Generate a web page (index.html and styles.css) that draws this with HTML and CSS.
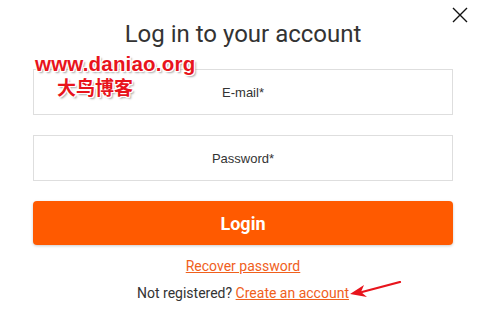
FILE: index.html
```html
<!DOCTYPE html>
<html>
<head>
<meta charset="utf-8">
<link rel="stylesheet" href="styles.css">
</head>
<body>
<div class="modal">
  <button class="close" aria-label="Close">
    <svg width="16" height="16" viewBox="0 0 16 16"><path d="M1 1 L15 15 M15 1 L1 15" stroke="#111" stroke-width="1.4" fill="none"/></svg>
  </button>
  <h1 class="title">Log in to your account</h1>
  <form class="form">
    <div class="field">E-mail*</div>
    <div class="field">Password*</div>
    <button type="button" class="login">Login</button>
  </form>
  <p class="recover"><a href="#">Recover password</a></p>
  <p class="register">Not registered? <a href="#">Create an account</a></p>

  <div class="wm">
    <div class="wm-url">www.daniao.org</div>
    <div class="wm-cn">大鸟博客</div>
  </div>
  <svg class="arrow" width="54" height="18" viewBox="0 0 54 18">
    <path d="M52 1 L14 11" stroke="#e8141c" stroke-width="2.2" fill="none" stroke-linecap="round"/>
    <path d="M2 13 L16 4 L13 11 L19 16 Z" fill="#e8141c"/>
  </svg>
</div>
</body>
</html>
```
FILE: styles.css
```css
* { box-sizing: border-box; }
html, body { margin: 0; padding: 0; background: #fff; }
body {
  font-family: Roboto, "Liberation Sans", Arial, sans-serif;
  color: #333;
  width: 480px;
  height: 316px;
  overflow: hidden;
}
.modal {
  position: relative;
  padding: 20px 27px 0 33px;
}
.close {
  position: absolute;
  top: 7px;
  right: 12px;
  width: 16px;
  height: 16px;
  padding: 0;
  border: 0;
  background: none;
  display: flex;
}
.title {
  margin: 0;
  font-size: 24px;
  line-height: 28px;
  font-weight: 400;
  text-align: center;
  color: #333;
}
.form {
  margin-top: 21px;
  display: flex;
  flex-direction: column;
  gap: 20px;
}
.field {
  height: 46px;
  border: 1px solid #dedede;
  display: flex;
  align-items: center;
  justify-content: center;
  font-family: "Liberation Sans", Arial, sans-serif;
  font-size: 13px;
  color: #333;
}
.login {
  height: 44px;
  border: 0;
  border-radius: 4px;
  background: #ff5a00;
  color: #fff;
  font-family: Roboto, "Liberation Sans", Arial, sans-serif;
  font-size: 18px;
  font-weight: 700;
  box-shadow: 0 1px 3px rgba(0,0,0,0.2);
}
.recover, .register {
  margin: 0;
  text-align: center;
  font-size: 14px;
  line-height: 20px;
}
.recover { margin-top: 11px; }
.register { margin-top: 7px; color: #333; }
a { color: #f0601c; text-decoration: underline; }
.wm {
  position: absolute;
  left: 35px;
  top: 52px;
  color: #e8141c;
  font-weight: 700;
  text-shadow: 1px 0 #fff, -1px 0 #fff, 0 1px #fff, 0 -1px #fff, 1px 1px #fff, -1px -1px #fff, 1px -1px #fff, -1px 1px #fff, 2px 2px 2px rgba(0,0,0,0.35);
}
.wm-url {
  font-family: "Liberation Sans", Arial, sans-serif;
  font-size: 20.5px;
  line-height: 23px;
  letter-spacing: 0.2px;
}
.wm-cn {
  font-family: "Noto Sans CJK SC", sans-serif;
  font-size: 19px;
  line-height: 24px;
  margin-left: 22px;
}
.arrow {
  position: absolute;
  left: 348px;
  top: 281px;
}
```
